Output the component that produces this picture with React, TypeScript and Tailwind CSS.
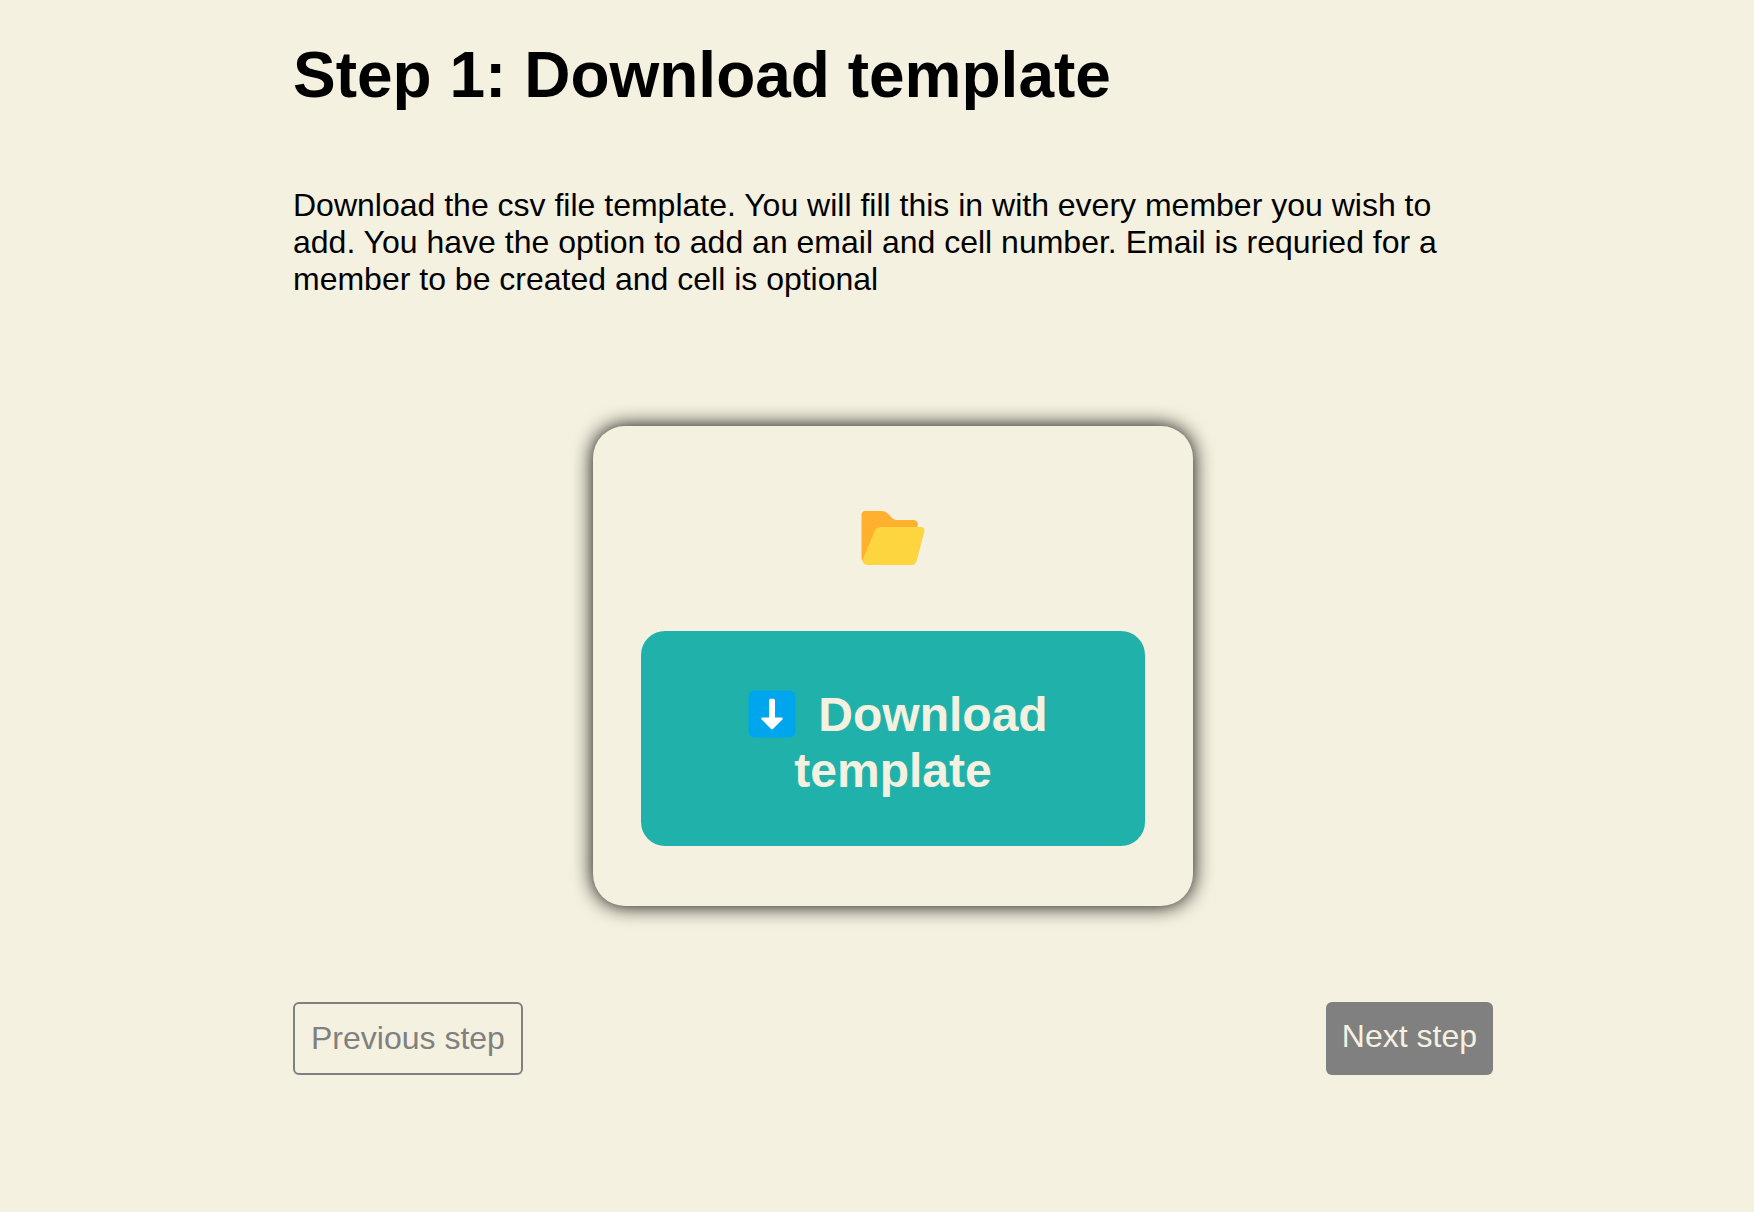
function FolderIcon() {
  return (
    <svg width="64" height="56" viewBox="0 0 64 56" className="block">
      <path
        d="M0.5 5Q0.5 1 4.5 1H20.5Q24 1 26.5 3.2L30.5 7.4Q33 10 36 10H52Q56.5 10 56.7 14V22L10 54L4 54Q0.5 50 0.5 48Z"
        fill="#ffb02e"
      />
      <path
        d="M13.7 21Q15.2 17 19.7 17H59.2Q64.4 17 63.2 22L55.8 50.5Q54.4 55 50.5 55H7.5Q2.2 55 1.4 50.5Z"
        fill="#fcd53f"
      />
    </svg>
  );
}

function DownArrowIcon() {
  return (
    <svg width="48" height="48" viewBox="0 0 48 48" className="mr-[22px] ml-[10px] inline-block align-[-7px]">
      <rect x="0.5" y="0.5" width="47" height="47" rx="6" fill="#00a6ed" />
      <path
        d="M21 10.5Q21 8.7 22.6 8.7H25.4Q27 8.7 27 10.5V27.5H33.2Q35.2 27.7 34.6 29.2L25.2 38.7Q24 39.8 22.8 38.7L13.4 29.2Q12.8 27.7 14.8 27.5H21Z"
        fill="#ffffff"
      />
    </svg>
  );
}

export default function App() {
  return (
    <div className="min-h-screen bg-[#f5f1e0] pl-[293px] font-['Liberation_Sans',Arial,sans-serif] text-black">
      <main className="flex w-[1200px] flex-col pt-[39px]">
        <h1 className="text-[64px] leading-[73px] font-bold">Step 1: Download template</h1>
        <p className="mt-[75px] text-[32px] leading-[37px]">
          Download the csv file template. You will fill this in with every member you wish to add. You have the option
          to add an email and cell number. Email is requried for a member to be created and cell is optional
        </p>
        <section className="mt-[128px] flex h-[480px] w-[600px] flex-col items-center self-center rounded-[32px] px-12 pt-[84px] shadow-[0_0_20px_black]">
          <FolderIcon />
          <button className="mt-[65px] h-[215px] w-full rounded-3xl bg-[#20b2aa] px-20 pt-[8px] text-center text-[48px] leading-[56px] font-bold text-[#f5f1e0]">
            <DownArrowIcon />
            Download template
          </button>
        </section>
        <nav className="mt-24 flex h-[73px] justify-between text-[32px] leading-[37px]">
          <button className="rounded-md border-2 border-[#808080] px-4 text-[#808080]">Previous step</button>
          <button className="flex items-start rounded-md bg-[#808080] px-4 pt-4 text-[#f5f1e0]">Next step</button>
        </nav>
      </main>
    </div>
  );
}
